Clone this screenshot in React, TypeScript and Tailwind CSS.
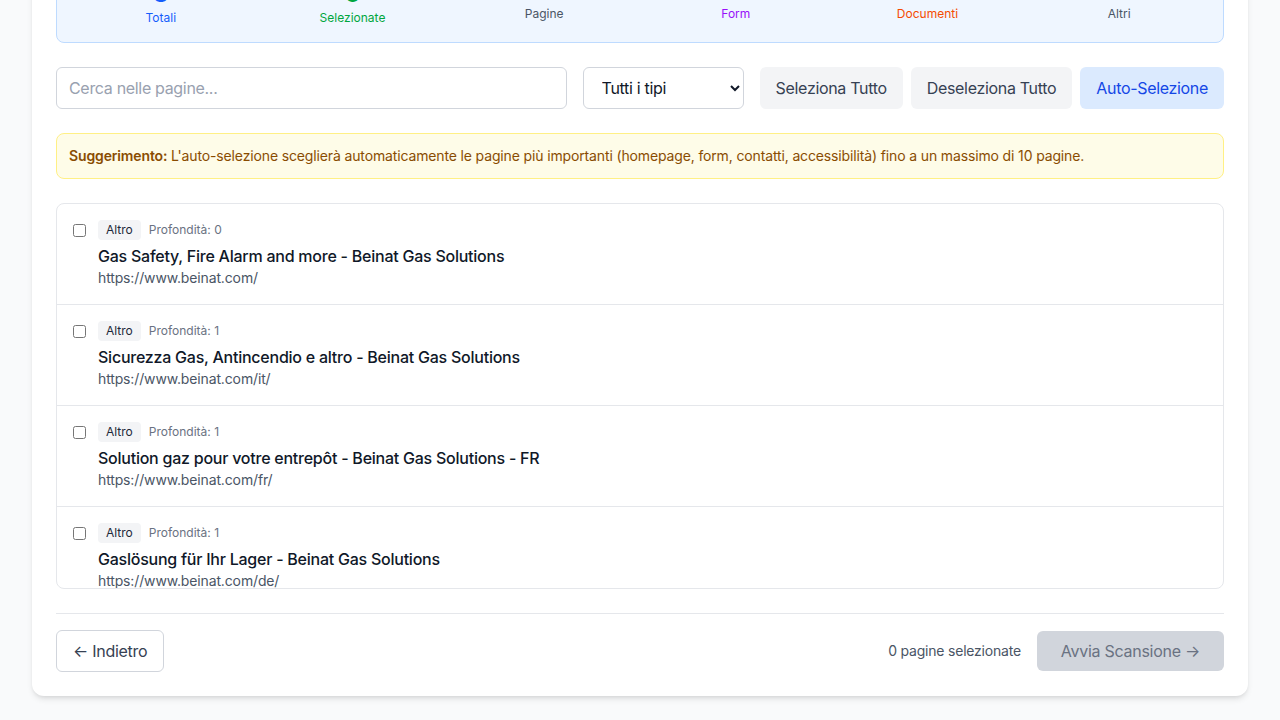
import React from "react";

const pages = [
  { title: "Gas Safety, Fire Alarm and more - Beinat Gas Solutions", url: "https://www.beinat.com/", depth: 0 },
  { title: "Sicurezza Gas, Antincendio e altro - Beinat Gas Solutions", url: "https://www.beinat.com/it/", depth: 1 },
  { title: "Solution gaz pour votre entrepôt - Beinat Gas Solutions - FR", url: "https://www.beinat.com/fr/", depth: 1 },
  { title: "Gaslösung für Ihr Lager - Beinat Gas Solutions", url: "https://www.beinat.com/de/", depth: 1 },
  { title: "Solución de gas para su almacén - Beinat Gas Solutions", url: "https://www.beinat.com/es/", depth: 1 },
];

export default function App() {
  return (
    <div
      className="h-[720px] overflow-hidden bg-gray-50"
      style={{ fontFamily: "Inter, 'Noto Sans', sans-serif" }}
    >
      <div className="max-w-7xl mx-auto px-8 -mt-[63px]">
        <div className="bg-white rounded-xl shadow-md p-6">
          <div className="bg-blue-50 border border-blue-200 rounded-lg p-4 grid grid-cols-6 gap-4 text-center">
            <div>
              <div className="text-2xl font-bold text-blue-600">8</div>
              <div className="text-xs text-blue-600">Totali</div>
            </div>
            <div>
              <div className="text-2xl font-bold text-green-600">0</div>
              <div className="text-xs text-green-600">Selezionate</div>
            </div>
            <div>
              <div className="text-xl font-bold text-gray-600">8</div>
              <div className="text-xs text-gray-600">Pagine</div>
            </div>
            <div>
              <div className="text-xl font-bold text-purple-600">0</div>
              <div className="text-xs text-purple-600">Form</div>
            </div>
            <div>
              <div className="text-xl font-bold text-orange-600">0</div>
              <div className="text-xs text-orange-600">Documenti</div>
            </div>
            <div>
              <div className="text-xl font-bold text-gray-600">8</div>
              <div className="text-xs text-gray-600">Altri</div>
            </div>
          </div>

          <div className="mt-6 flex items-center gap-4 tracking-[-0.02em]">
            <input
              type="text"
              placeholder="Cerca nelle pagine..."
              className="flex-1 h-[42px] px-3 border border-gray-300 rounded-md text-base text-gray-900 placeholder:text-gray-400 outline-none"
            />
            <select className="w-[161px] h-[42px] pl-[14px] pr-3 border border-gray-300 rounded-md text-base text-gray-900 bg-white">
              <option>Tutti i tipi</option>
            </select>
            <div className="flex gap-2">
              <button className="h-[42px] px-4 bg-gray-100 text-gray-700 rounded-md text-base">Seleziona Tutto</button>
              <button className="h-[42px] px-4 bg-gray-100 text-gray-700 rounded-md text-base">Deseleziona Tutto</button>
              <button className="h-[42px] px-4 bg-blue-100 text-blue-700 rounded-md text-base">Auto-Selezione</button>
            </div>
          </div>

          <div className="mt-6 bg-yellow-50 border border-yellow-200 rounded-lg p-3 text-sm text-yellow-800 tracking-[-0.01em]">
            <strong className="font-semibold">Suggerimento:</strong> L'auto-selezione sceglierà automaticamente le pagine più importanti (homepage, form, contatti, accessibilità) fino a un massimo di 10 pagine.
          </div>

          <div className="mt-6 border border-gray-200 rounded-lg max-h-[386px] overflow-hidden divide-y divide-gray-200">
            {pages.map((p) => (
              <div key={p.url} className="p-4 flex items-start gap-3">
                <input type="checkbox" className="mt-1 w-[13px] h-[13px]" />
                <div className="flex-1">
                  <div className="flex items-center gap-2 mb-1">
                    <span className="px-2 py-0.5 bg-gray-100 text-gray-800 text-xs rounded">Altro</span>
                    <span className="text-xs text-gray-500">Profondità: {p.depth}</span>
                  </div>
                  <div className="text-base font-medium text-gray-900 tracking-[-0.015em]">{p.title}</div>
                  <div className="text-sm text-gray-600 tracking-[-0.01em]">{p.url}</div>
                </div>
              </div>
            ))}
          </div>

          <div className="mt-6 pt-4 border-t border-gray-200 flex items-center justify-between">
            <button className="h-[42px] px-4 border border-gray-300 rounded-md text-base text-gray-700 bg-white tracking-[-0.017em]">← Indietro</button>
            <div className="flex items-center gap-4">
              <span className="text-sm text-gray-600 tracking-[-0.015em]">0 pagine selezionate</span>
              <button className="h-[40px] px-6 bg-gray-300 text-gray-500 rounded-md text-base tracking-[-0.017em]" disabled>Avvia Scansione →</button>
            </div>
          </div>
        </div>
      </div>
    </div>
  );
}
